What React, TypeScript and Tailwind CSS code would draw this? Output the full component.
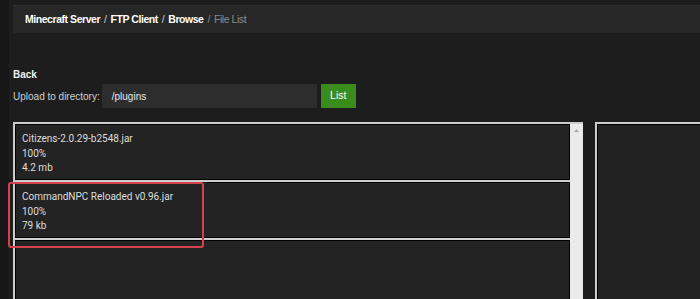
import React from "react";

const rows = [
  { name: "Citizens-2.0.29-b2548.jar", pct: "100%", size: "4.2 mb" },
  { name: "CommandNPC Reloaded v0.96.jar", pct: "100%", size: "79 kb" },
];

export default function App() {
  return (
    <div className="relative flex w-[700px] h-[299px] overflow-hidden bg-[#1d1d1d] font-['Liberation_Sans',Arial,sans-serif]">
      <div className="w-[9px] shrink-0 bg-[#171717]" />
      <div className="flex flex-1 flex-col pl-[4px] min-w-0">
        <div className="mt-[5px] flex h-[28px] items-center border-t border-[#303030] bg-[#272727] pl-[12px] text-[10.5px] font-bold tracking-[-0.45px] text-white">
          <span>Minecraft Server</span>
          <span className="mx-[4px] font-normal text-[#cfcfcf]">/</span>
          <span>FTP Client</span>
          <span className="mx-[4px] font-normal text-[#cfcfcf]">/</span>
          <span>Browse</span>
          <span className="mx-[4px] font-normal text-[#8a8a8a]">/</span>
          <span className="font-normal text-[#8a8a8a]">File List</span>
        </div>

        <div className="mt-[35px] h-[14px] text-[10px] font-bold leading-[14px] text-[#f0f0f0]">Back</div>

        <div className="mt-[2px] flex h-[24px] items-center text-[10px]">
          <span className="text-[#d0d0d0]">Upload to directory:</span>
          <div className="ml-[2px] flex h-[24px] w-[215px] items-center bg-[#2d2d2d] pl-[10px] text-[#e8e8e8]">
            /plugins
          </div>
          <button className="ml-[4px] flex h-[24px] w-[35px] items-center justify-center bg-[#3a8c1c] text-[10.5px] text-white">
            List
          </button>
        </div>

        <div className="mt-[14px] flex flex-1 gap-[12px]">
          <div className="flex w-[570px] shrink-0 border-l-2 border-t-2 border-[#cdcdcd]">
            <div className="flex flex-1 flex-col gap-[2px] bg-[#cdcdcd]">
              {rows.map((r) => (
                <div
                  key={r.name}
                  className="h-[56px] shrink-0 border border-black bg-[#232323] pl-[6px] pt-[7px] font-['Roboto',Arial,sans-serif] text-[10px] leading-[14.5px] text-[#dedede]"
                >
                  <div>{r.name}</div>
                  <div>{r.pct}</div>
                  <div>{r.size}</div>
                </div>
              ))}
              <div className="flex-1 border border-black border-b-0 bg-[#232323]" />
            </div>
            <div className="flex w-[13px] shrink-0 justify-center bg-[#ebebeb] pt-[5px]">
              <svg width="5" height="3" viewBox="0 0 5 3">
                <path d="M0 3 L2.5 0 L5 3 Z" fill="#a8a8a8" />
              </svg>
            </div>
          </div>
          <div className="flex-1 border-l-2 border-t-2 border-[#cdcdcd]">
            <div className="h-full border-l border-t border-black bg-[#222222]" />
          </div>
        </div>
      </div>

      <div className="pointer-events-none absolute left-[8px] top-[182px] h-[66px] w-[196px] rounded-[3px] border-2 border-[#d4424c]" />
    </div>
  );
}
